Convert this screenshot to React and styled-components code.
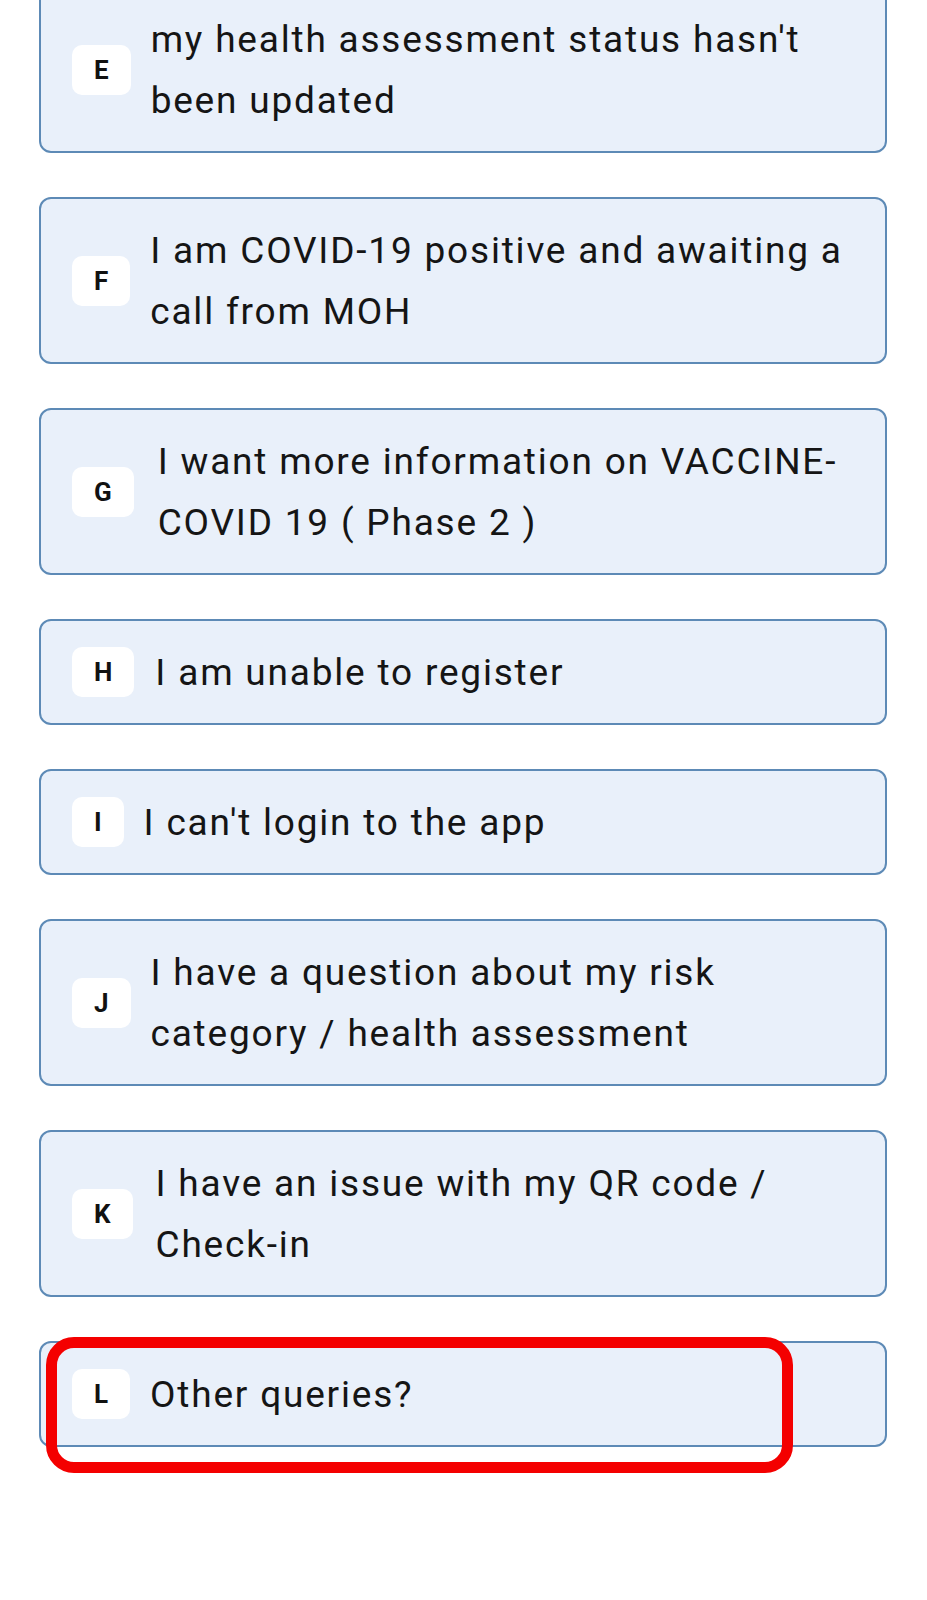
import React from "react";
import styled, { createGlobalStyle } from "styled-components";

const GlobalStyle = createGlobalStyle`
  body {
    margin: 0;
    background: #fff;
    font-family: Roboto, "Noto Sans", sans-serif;
  }
`;

const Page = styled.div`
  width: 927px;
  height: 1600px;
  overflow: hidden;
  background: #fff;
`;

const List = styled.div`
  display: flex;
  flex-direction: column;
  gap: 44px;
  margin-top: -14px;
  padding: 0 40px 0 39px;
`;

const Card = styled.div`
  position: relative;
  display: flex;
  align-items: center;
  padding: 20.5px 20px 20.5px 31px;
  background: #e9f0fa;
  border: 2px solid #5d8ab6;
  border-radius: 12px;
`;

const Badge = styled.div`
  flex: none;
  display: flex;
  align-items: center;
  justify-content: center;
  height: 50px;
  padding: 0 22px;
  margin-right: ${(p) => p.$gap || 20}px;
  background: #fff;
  border-radius: 10px;
  font-size: 26px;
  font-weight: 700;
  color: #111;
`;

const Label = styled.div`
  flex: 1;
  font-size: 37px;
  line-height: 61px;
  letter-spacing: 1.8px;
  color: #151515;
`;

const Highlight = styled.div`
  position: absolute;
  left: 5px;
  top: -6px;
  width: 747px;
  height: 136px;
  box-sizing: border-box;
  border: 11px solid #f40000;
  border-radius: 28px;
  pointer-events: none;
`;

const options = [
  { key: "E", text: "my health assessment status hasn't been updated" },
  { key: "F", text: "I am COVID-19 positive and awaiting a call from MOH" },
  { key: "G", text: "I want more information on VACCINE-COVID 19 ( Phase 2 )", gap: 24 },
  { key: "H", text: "I am unable to register", gap: 21 },
  { key: "I", text: "I can't login to the app", gap: 20 },
  { key: "J", text: "I have a question about my risk category / health assessment" },
  { key: "K", text: "I have an issue with my QR code / Check-in", gap: 23 },
  { key: "L", text: "Other queries?", highlight: true },
];

function App() {
  return (
    <>
      <GlobalStyle />
      <Page>
        <List>
          {options.map((o) => (
            <Card key={o.key}>
              <Badge $gap={o.gap}>{o.key}</Badge>
              <Label>{o.text}</Label>
              {o.highlight && <Highlight />}
            </Card>
          ))}
        </List>
      </Page>
    </>
  );
}

export default App;
